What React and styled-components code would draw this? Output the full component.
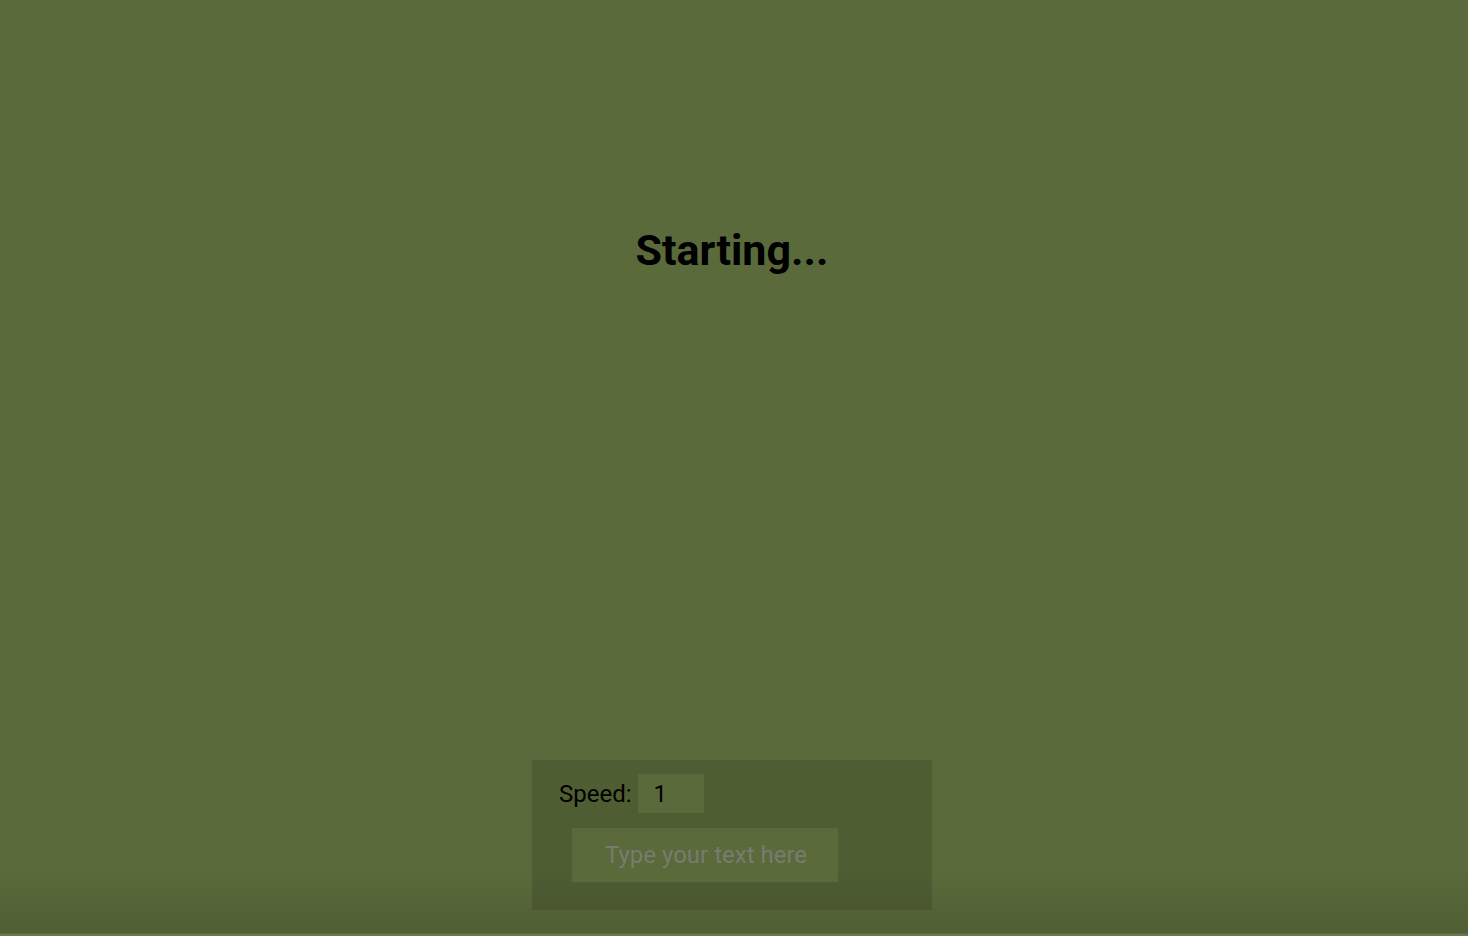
import React from "react";
import styled, {createGlobalStyle} from "styled-components";

const GlobalStyle = createGlobalStyle`
    html, body {
        margin: 0;
        padding: 0;
        height: 100%;
        background: #5a6a3a;
    }
    #root {
        height: 100%;
    }
`;

const Page = styled.div`
    display: flex;
    flex-direction: column;
    align-items: center;
    height: 100vh;
    box-sizing: border-box;
    padding-right: 4px;
    font-family: Roboto, "Liberation Sans", sans-serif;
    background: linear-gradient(to bottom, #5a6a3a 0%, #5a6a3a 93%, #505f34 99.7%, #6c7656 99.8%);
`;

const Heading = styled.h1`
    margin: 224px 0 0;
    font-size: 43px;
    line-height: 52px;
    font-weight: 700;
    color: #000;
`;

const Spacer = styled.div`
    flex: 1;
`;

const ControlPanel = styled.div`
    width: 400px;
    height: 150px;
    box-sizing: border-box;
    padding: 14px 0 0 27px;
    margin-bottom: 26px;
    background: rgba(0, 0, 0, 0.12);
    display: flex;
    flex-direction: column;
`;

const SpeedRow = styled.div`
    display: flex;
    align-items: center;
    gap: 6px;
`;

const Label = styled.label`
    font-size: 24px;
    color: #000;
`;

const Field = styled.input`
    border: none;
    outline: none;
    background: #5a6a3a;
    font-family: Roboto, "Liberation Sans", sans-serif;
    font-size: 24px;
    color: #000;
    box-sizing: border-box;
    width: ${props => props.$width}px;
    height: ${props => props.$height}px;
    padding: 0 0 0 ${props => props.$pad}px;
    margin: 0;

    &::placeholder {
        color: #787b70;
    }
`;

const TextRow = styled.div`
    margin: 15px 0 0 13px;
`;

const App = () => {
    return (
        <>
            <GlobalStyle/>
            <Page>
                <Heading>Starting...</Heading>
                <Spacer/>
                <ControlPanel>
                    <SpeedRow>
                        <Label>Speed:</Label>
                        <Field $width={66} $height={39} $pad={16} defaultValue="1"/>
                    </SpeedRow>
                    <TextRow>
                        <Field $width={266} $height={54} $pad={33} placeholder="Type your text here"/>
                    </TextRow>
                </ControlPanel>
            </Page>
        </>
    )
}

export default App;
